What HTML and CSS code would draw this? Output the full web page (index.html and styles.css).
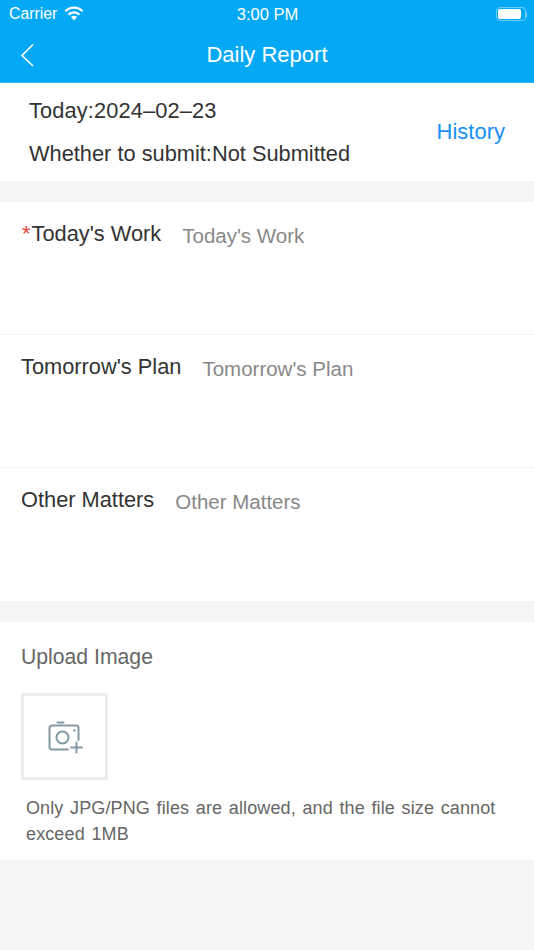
FILE: index.html
```html
<!DOCTYPE html>
<html lang="en">
<head>
<meta charset="utf-8">
<title>Daily Report</title>
<link rel="stylesheet" href="styles.css">
</head>
<body>
<header class="header">
  <div class="status">
    <div class="status-left">
      <span class="carrier">Carrier</span>
      <svg class="wifi" width="20" height="15" viewBox="0 0 20 15"><path d="M10 14.500 6.900 11a4.400 4.400 0 0 1 6.200 0Z" fill="#fff"/><path d="M4.600 8.600a7.700 7.700 0 0 1 10.800 0" fill="none" stroke="#fff" stroke-width="2.300"/><path d="M1.400 5.200a12.300 12.300 0 0 1 17.200 0" fill="none" stroke="#fff" stroke-width="2.300"/></svg>
    </div>
    <span class="time">3:00 PM</span>
    <div class="battery"><div class="battery-body"><div class="battery-fill"></div></div><div class="battery-cap"></div></div>
  </div>
  <div class="nav">
    <svg class="back" width="14" height="24" viewBox="0 0 14 24"><path d="M13 1.500 2 12.500l11 10.500" fill="none" stroke="#fff" stroke-width="1.600"/></svg>
    <h1 class="title">Daily Report</h1>
  </div>
</header>
<main>
  <section class="summary">
    <div class="summary-text">
      <p class="summary-date">Today:2024–02–23</p>
      <p>Whether to submit:Not Submitted</p>
    </div>
    <a class="history">History</a>
  </section>
  <section class="form">
    <div class="row"><span class="label"><span class="req">*</span>Today's Work</span><span class="ph">Today's Work</span></div>
    <div class="row"><span class="label">Tomorrow's Plan</span><span class="ph">Tomorrow's Plan</span></div>
    <div class="row"><span class="label">Other Matters</span><span class="ph">Other Matters</span></div>
  </section>
  <section class="upload">
    <h2 class="upload-title">Upload Image</h2>
    <div class="picker">
      <svg width="36" height="34" viewBox="0 0 36 34" fill="none" stroke="#8499a6" stroke-width="2" stroke-linecap="round" stroke-linejoin="round"><path d="M10.500 2.500h6"/><path d="M21 29.500H5a2.500 2.500 0 0 1-2.500-2.500V8A2.500 2.500 0 0 1 5 5.500h24.500a2 2 0 0 1 2 2V20"/><circle cx="15.500" cy="17.500" r="6"/><circle cx="27.500" cy="10.500" r="1.200" fill="#8499a6" stroke="none"/><path d="M24 27.500h11M29.500 22.500v10"/></svg>
    </div>
    <p class="hint">Only JPG/PNG files are allowed, and the file size cannot exceed 1MB</p>
  </section>
</main>
</body>
</html>
```
FILE: styles.css
```css
* { box-sizing: border-box; }
html, body { margin: 0; padding: 0; }
body { width: 534px; height: 950px; overflow: hidden; background: #f5f5f5; font-family: "Liberation Sans", Arial, sans-serif; color: #333; }
p, h1, h2 { margin: 0; font-weight: 400; }
.header { background: #04a9f5; height: 83px; color: #fff; border-bottom: 1px solid #35bbf8; }
.status { height: 28px; display: grid; grid-template-columns: 1fr auto 1fr; align-items: center; padding: 0 7px 0 9px; }
.status-left { display: flex; align-items: center; gap: 7px; }
.carrier { font-size: 15.800px; }
.wifi { margin-top: -2px; }
.time { font-size: 16.500px; margin-left: -1px; }
.battery { justify-self: end; display: flex; align-items: center; }
.battery-body { width: 30px; height: 14px; border: 1.500px solid #6ccdf9; border-radius: 4px; padding: 1px; }
.battery-fill { width: 23px; height: 100%; background: #fff; border-radius: 2px; }
.battery-cap { width: 1.500px; height: 5px; background: #6ccdf9; }
.nav { height: 53px; position: relative; display: flex; align-items: center; justify-content: center; }
.back { position: absolute; left: 20px; top: 15px; }
.title { font-size: 22px; }
.summary { height: 98px; background: #fff; display: flex; justify-content: space-between; align-items: center; padding: 0 29px; }
.summary-text { font-size: 21.800px; display: flex; flex-direction: column; gap: 17px; padding-top: 1px; }
.summary-date { letter-spacing: .13px; }
.history { color: #1890f5; font-size: 22px; }
.form { margin-top: 21px; background: #fff; }
.row { height: 133px; padding: 19px 21px 0; display: flex; gap: 21px; align-items: flex-start; border-bottom: 1px solid #f5f5f5; font-size: 21.800px; }
.row:last-child { border-bottom: 0; }
.req { color: #e8453c; margin: 0 1px 0 1px; }
.ph { color: #888; margin-top: 3px; font-size: 20.500px; }
.upload { margin-top: 21px; height: 238px; background: #fff; padding: 23px 21px 0; }
.upload-title { font-size: 21.200px; color: #666; }
.picker { margin-top: 24px; width: 87px; height: 87px; border: 3px solid #ececec; border-radius: 2px; display: flex; align-items: center; justify-content: center; }
.hint { margin: 16px 0 0 5px; font-size: 18px; letter-spacing: .12px; word-spacing: 1.500px; line-height: 25.500px; color: #666; }
```
